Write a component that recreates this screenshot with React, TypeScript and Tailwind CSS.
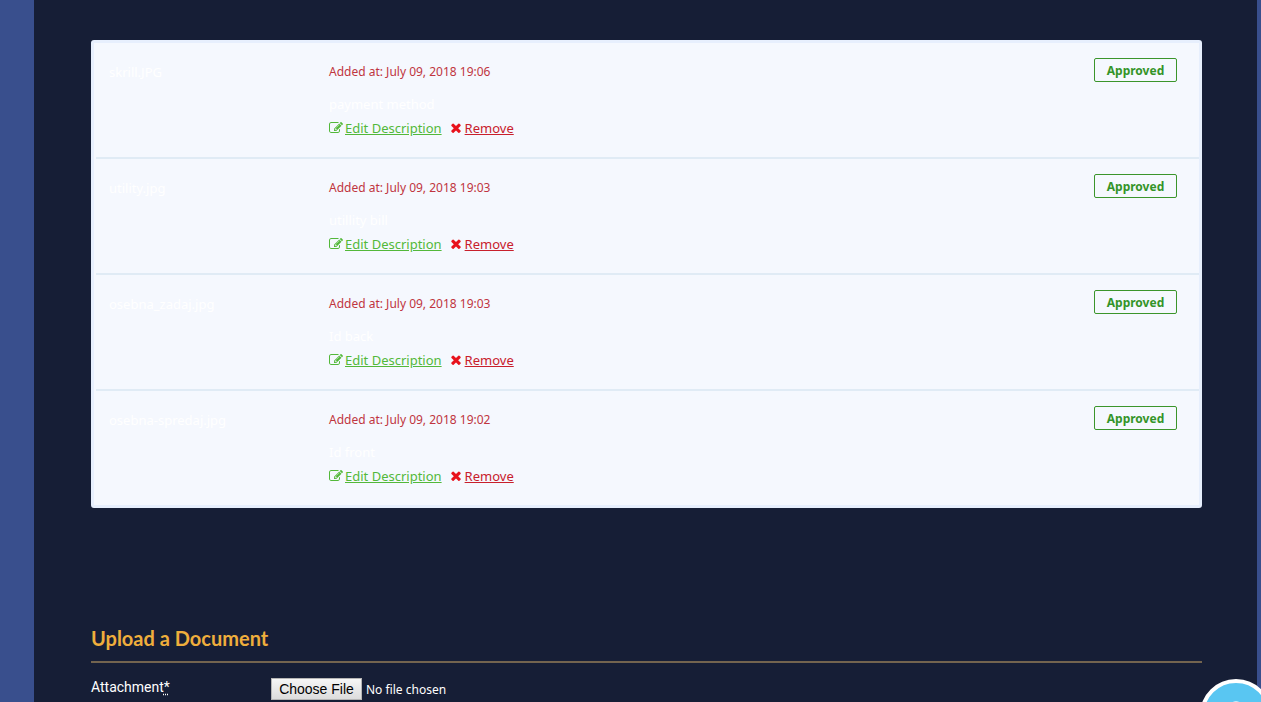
type Doc = { file: string; added: string; description: string };

const documents: Doc[] = [
  { file: "skrill.JPG", added: "July 09, 2018 19:06", description: "payment method" },
  { file: "utility.jpg", added: "July 09, 2018 19:03", description: "utillity bill" },
  { file: "osebna_zadaj.jpg", added: "July 09, 2018 19:03", description: "Id back" },
  { file: "osebna-spredaj.jpg", added: "July 09, 2018 19:02", description: "Id front" },
];

function EditIcon() {
  return (
    <svg viewBox="0 0 1792 1792" className="h-[14px] w-[14px] shrink-0 fill-current" aria-hidden="true">
      <path d="M888 1184l116-116-152-152-116 116v56h96v96h56zm440-720q-16-16-33 1l-350 350q-17 17-1 33t33-1l350-350q17-17 1-33zm80 594v190q0 119-84.5 203.5t-203.5 84.5h-832q-119 0-203.5-84.5t-84.5-203.5v-832q0-119 84.5-203.5t203.5-84.5h832q63 0 117 25 15 7 18 23 3 17-9 29l-49 49q-14 14-32 8-23-6-45-6h-832q-66 0-113 47t-47 113v832q0 66 47 113t113 47h832q66 0 113-47t47-113v-126q0-13 9-22l64-64q15-15 35-7t20 29zm-96-738l288 288-672 672h-288v-288zm444 132l-92 92-288-288 92-92q28-28 68-28t68 28l152 152q28 28 28 68t-28 68z" />
    </svg>
  );
}

function RemoveIcon() {
  return (
    <svg viewBox="302 302 1188 1252" className="h-[10px] w-[10px] shrink-0 fill-current text-[#e8121c]" aria-hidden="true">
      <path d="M1490 1322q0 40-28 68l-136 136q-28 28-68 28t-68-28l-294-294-294 294q-28 28-68 28t-68-28l-136-136q-28-28-28-68t28-68l294-294-294-294q-28-28-28-68t28-68l136-136q28-28 68-28t68 28l294 294 294-294q28-28 68-28t68 28l136 136q28 28 28 68t-28 68l-294 294 294 294q28 28 28 68z" />
    </svg>
  );
}

function DocumentRow({ doc }: { doc: Doc }) {
  return (
    <li className="flex items-start border-b-2 border-[#e0ebf5] pt-[15px] pr-[22px] pb-[19px] pl-[13px] last:border-b-0">
      <div className="w-[220px] shrink-0 pt-1 text-[13px] leading-5 text-white">{doc.file}</div>
      <div className="flex-1 pt-1">
        <p className="text-xs leading-5 text-[#c03540]">Added at: {doc.added}</p>
        <p className="mt-3 text-[13px] leading-5 text-white">{doc.description}</p>
        <div className="mt-1 flex gap-[9px] text-[13px] leading-5 whitespace-nowrap">
          <a href="#edit" className="flex items-center gap-[2px] text-[#53b83a]">
            <EditIcon />
            <span className="underline">Edit Description</span>
          </a>
          <a href="#remove" className="flex items-center gap-1 text-[#c8202c]">
            <RemoveIcon />
            <span className="underline">Remove</span>
          </a>
        </div>
      </div>
      <span className="flex h-6 w-[83px] items-center justify-center rounded-xs border border-[#3b952b] pt-[2px] text-xs font-bold text-[#349429]">
        Approved
      </span>
    </li>
  );
}

export default function App() {
  return (
    <div className="min-h-screen bg-[#394f8d] pr-1 pl-[34px] font-['Noto_Sans',sans-serif]">
      <main className="min-h-screen bg-[#161e36] pt-10 pr-[55px] pl-[57px]">
        <ul className="rounded-[3px] border-[3px] border-[#e7effd] bg-[#f5f8fe] pl-[2px]">
          {documents.map((doc) => (
            <DocumentRow key={doc.file} doc={doc} />
          ))}
        </ul>
        <section className="pt-[116px]">
          <h2 className="border-b-2 border-[#73644f] pb-[9px] font-['Lato',sans-serif] text-xl leading-7 font-bold text-[#efae3c]">
            Upload a Document
          </h2>
          <div className="flex items-start pt-[14px] text-sm text-white">
            <label htmlFor="attachment" className="w-[180px] shrink-0 font-['Roboto',sans-serif] leading-5">
              Attachment
              <abbr title="required" className="underline decoration-dotted underline-offset-2">*</abbr>
            </label>
            <input
              id="attachment"
              type="file"
              className="mt-px min-w-0 flex-1 text-xs leading-5 file:mr-1 file:h-[22px] file:w-[91px] file:border file:border-solid file:border-[#b5b5b5] file:bg-linear-to-b file:from-[#f6f6f6] file:to-[#dcdcdc] file:p-0 file:font-['Liberation_Sans',sans-serif] file:text-sm file:text-black"
            />
          </div>
        </section>
      </main>
      <button
        type="button"
        aria-label="Open chat"
        className="fixed -right-[11px] -bottom-[49px] flex h-[72px] w-[72px] justify-center rounded-full border-4 border-white bg-[#59c6f2] pt-[17px]"
      >
        <svg viewBox="0 0 16 24" className="h-6 w-4" aria-hidden="true">
          <ellipse cx="8" cy="8" rx="6" ry="7" fill="#c9edfb" />
        </svg>
      </button>
    </div>
  );
}
